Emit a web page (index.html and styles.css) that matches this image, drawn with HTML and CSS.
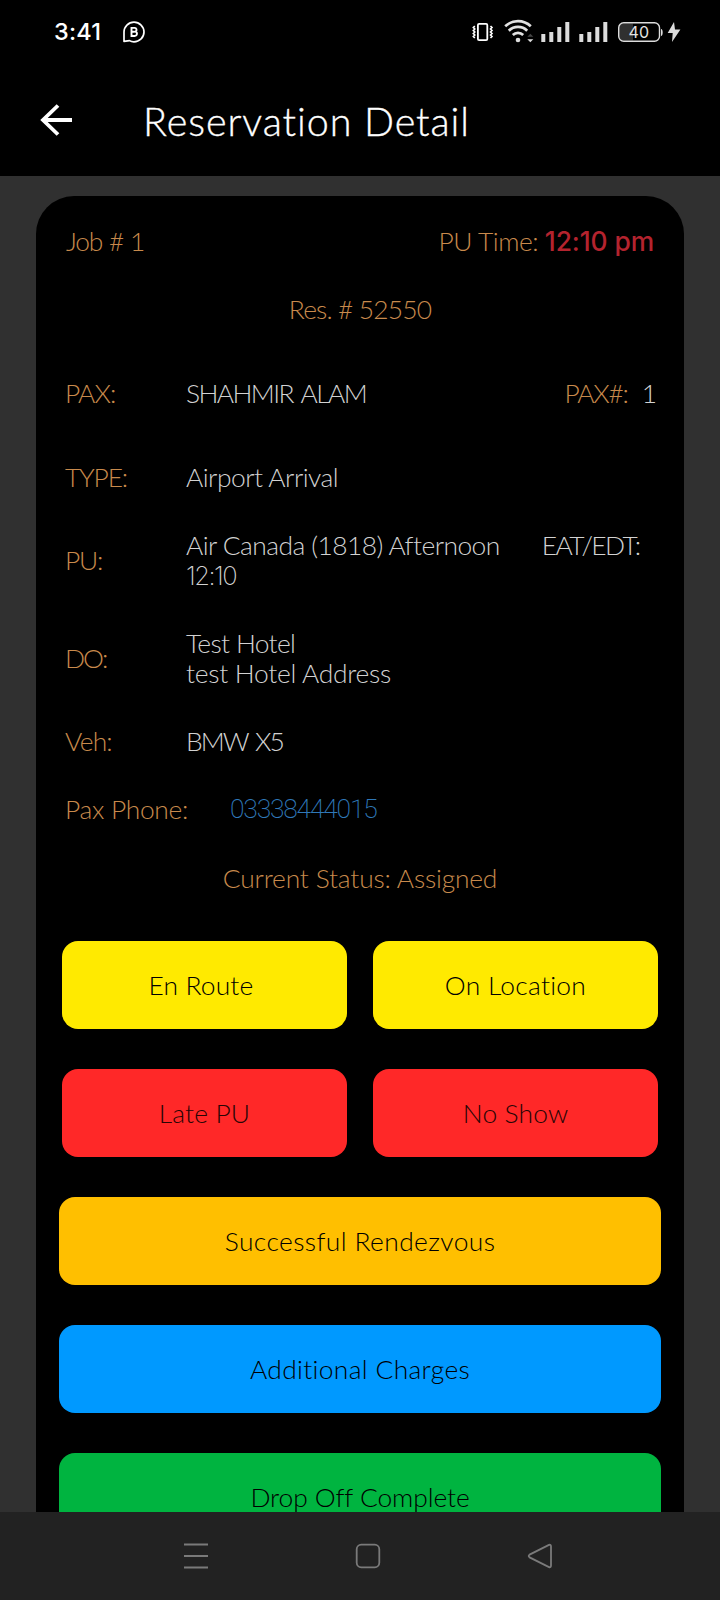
FILE: index.html
```
<!DOCTYPE html>
<html lang="en">
<head>
<meta charset="utf-8">
<title>Reservation Detail</title>
<link rel="stylesheet" href="styles.css">
</head>
<body>
<div class="phone">
  <div class="status">
    <span class="clock">3:41</span>
    <svg class="chat" width="24" height="24" viewBox="0 0 24 24"><path d="M2 21.3V12a10 9.8 0 1 1 10 9.8c-2 0-3.400-.5-4.500-1.200L2 21.300Z" fill="none" stroke="#fff" stroke-width="1.700" stroke-linejoin="round"/><path d="M9.500 7.900V16h3.300a2.200 2.200 0 0 0 .6-4.300A2 2 0 0 0 12.300 7.900ZM9.500 11.800h3" fill="none" stroke="#fff" stroke-width="1.900"/></svg>
    <svg class="indicators" width="212" height="26" viewBox="470 19 212 26">
      <g fill="none" stroke="#fff">
        <rect x="477.900" y="23.900" width="9.400" height="16.200" rx="1.200" stroke-width="1.800"/>
        <path d="M474.800 26l-1.500 1.500 1.500 1.500-1.500 1.500 1.500 1.500-1.500 1.500 1.500 1.500-1.500 1.500 1.500 1.500M490.500 26l1.500 1.500-1.500 1.500 1.500 1.500-1.500 1.500 1.500 1.500-1.500 1.500 1.500 1.500-1.500 1.500" stroke-width="1.600"/>
      </g>
      <g fill="none" stroke="#e2e2e2" stroke-width="2.700">
        <path d="M505.200 26.300a18.500 18.500 0 0 1 25.600 0M508.800 30.700a13 13 0 0 1 18.400 0M512.800 35a7.400 7.400 0 0 1 10.400 0"/>
      </g>
      <g fill="#dcdcdc">
        <circle cx="518" cy="40" r="2.300"/>
        <path d="M527.300 39.300h6l-3 3Z"/><path d="M527.300 36.800h6l-3-3Z" fill="#444"/>
        <path d="M541.300 34h4v8h-4ZM549.300 32h4v10h-4ZM557.300 27h4v15h-4ZM565.300 22h4v20h-4Z"/>
        <path d="M579.300 34h4v8h-4ZM587.300 32h4v10h-4ZM595.300 27h4v15h-4ZM603.300 22h4v20h-4Z"/>
        <path d="M661 29c2.300 0 2.300 7 0 7ZM674 22l-6.300 11h5l-.7 9 8.400-12.500h-5.400Z"/>
      </g>
      <path d="M622 23.500h11v17h-11l-3-3v-11Z" fill="#303030"/>
      <rect x="618.700" y="22.700" width="40.800" height="18.600" rx="5" fill="none" stroke="#dcdcdc" stroke-width="1.400"/>
      <text class="charge" x="638.800" y="37.500" text-anchor="middle">40</text>
    </svg>
  </div>

  <header class="appbar">
    <svg class="back" width="34" height="34" viewBox="0 0 34 34"><path d="M33 17H4M19 2.500L4 17l15 14.500" fill="none" stroke="#fff" stroke-width="3.800"/></svg>
    <h1 class="title">Reservation Detail</h1>
  </header>

  <main class="content">
    <section class="card">
      <div class="row split"><span class="label job">Job # 1</span><span class="label time">PU Time: <b class="due">12:10 pm</b></span></div>
      <div class="row center label res">Res. # 52550</div>
      <div class="row pax"><span class="label k-pax">PAX:</span><span class="value name">SHAHMIR ALAM</span><span class="label count">PAX#:</span><span class="value one">1</span></div>
      <div class="row type"><span class="label k-type">TYPE:</span><span class="value arrival">Airport Arrival</span></div>
      <div class="row pu"><span class="label k-pu">PU:</span><span class="value flight">Air Canada (1818) Afternoon<span class="eat">EAT/EDT:</span><br><span class="digits">12:10</span></span></div>
      <div class="row do"><span class="label k-do">DO:</span><span class="value"><span class="hotel">Test Hotel</span><br><span class="address">test Hotel Address</span></span></div>
      <div class="row veh"><span class="label k-veh">Veh:</span><span class="value car">BMW X5</span></div>
      <div class="row tel"><span class="label k-phone">Pax Phone:</span><a class="number">03338444015</a></div>
      <div class="row center label current">Current Status: Assigned</div>

      <div class="actions">
        <div class="pair"><button class="btn yellow en-route">En Route</button><button class="btn yellow wide-text">On Location</button></div>
        <div class="pair"><button class="btn red">Late PU</button><button class="btn red">No Show</button></div>
        <button class="btn amber">Successful Rendezvous</button>
        <button class="btn blue">Additional Charges</button>
        <button class="btn green">Drop Off Complete</button>
      </div>
    </section>
  </main>

  <nav class="navbar">
    <svg width="26" height="26" viewBox="0 0 26 26"><path d="M1 1.500h24M1 13h24M1 24.500h24"/></svg>
    <svg width="26" height="26" viewBox="0 0 26 26"><rect x="1.700" y="1.700" width="22.600" height="22.600" rx="4.500"/></svg>
    <svg width="26" height="26" viewBox="0 0 26 26"><path d="M22 1.900L2.600 11.600q-1.800 1.400 0 2.800L22 24.100q2 .6 2-1.600V3.500q0-2.200-2-1.600Z"/></svg>
  </nav>
</div>
</body>
</html>
```
FILE: styles.css
```
* { box-sizing: border-box; }
body {
  margin: 0;
  background: #000;
  font-family: Lato, "Open Sans", sans-serif;
  font-weight: 300;
}
.phone {
  display: flex;
  flex-direction: column;
  width: 720px;
  height: 1600px;
  overflow: hidden;
}

.status {
  display: flex;
  align-items: center;
  height: 64px;
  padding: 0 38px 0 54px;
  color: #fff;
}
.clock { width: 68px; font: 500 23.5px/30px Inter, sans-serif; letter-spacing: 0.2px; }
.chat { display: block; }
.indicators { display: block; margin-left: auto; }
.charge { fill: #e2e2e2; font-family: Inter, sans-serif; font-weight: 400; font-size: 16px; }

.appbar {
  display: flex;
  align-items: center;
  height: 112px;
  padding: 2px 40px 0 38.5px;
  color: #fff;
}
.back { margin-bottom: 2px; }
.title {
  margin: 0 0 0 70.5px;
  font-size: 39.5px;
  font-weight: 300;
  line-height: 48px;
  letter-spacing: 0.93px;
  -webkit-text-stroke: 0.35px #fff;
}

.content {
  flex: 1;
  min-height: 0;
  overflow: hidden;
  padding: 20px 36px 0;
  background: #303030;
}
.card {
  height: 1500px;
  padding: 30px 29px 0;
  border-radius: 38px;
  background: #000;
  font-size: 26.4px;
  line-height: 30px;
}
.row { display: flex; align-items: center; white-space: nowrap; }
.row > .label:first-child { width: 121px; }
.split { justify-content: space-between; }
.center { justify-content: center; }
.label { color: #c88a4c; }
.value { color: #d2d2d2; }
.job { padding-left: 1px; letter-spacing: -1.2px; word-spacing: 1px; }
.time { letter-spacing: -0.46px; }
.due { margin-right: 1px; color: #b4232e; font-family: Inter, sans-serif; font-weight: 500; letter-spacing: -0.1px; }
.res { margin-top: 38px; letter-spacing: -0.84px; }
.pax { margin-top: 54px; }
.k-pax { letter-spacing: -0.9px; }
.name { flex: 1; letter-spacing: -1.6px; word-spacing: 3px; }
.count { letter-spacing: -1.25px; }
.one { margin: 0 -2px 0 14px; }
.type { margin-top: 54px; }
.k-type { letter-spacing: -1.2px; }
.arrival { letter-spacing: -0.5px; }
.pu { margin-top: 38px; }
.k-pu { letter-spacing: -1.22px; }
.flight { letter-spacing: -0.56px; }
.eat { margin-left: 42px; letter-spacing: -1.57px; }
.digits { font-family: Inter, sans-serif; font-weight: 200; font-size: 25.5px; line-height: 1; letter-spacing: -1.5px; }
.do { margin-top: 38px; }
.k-do { letter-spacing: -2px; }
.hotel { letter-spacing: -0.66px; }
.address { letter-spacing: -0.28px; }
.veh { margin-top: 38px; }
.k-veh { letter-spacing: -0.8px; }
.car { letter-spacing: -2px; word-spacing: 3px; }
.tel { margin-top: 38px; }
.row > .k-phone:first-child { width: 165px; letter-spacing: -0.31px; }
.number { color: #2f78b8; font-family: Roboto, sans-serif; font-weight: 200; letter-spacing: -1.2px; }
.current { margin-top: 39px; letter-spacing: -0.18px; }

.actions {
  display: flex;
  flex-direction: column;
  gap: 40px;
  margin: 48px -6px 0;
}
.pair { display: grid; grid-template-columns: 1fr 1fr; gap: 26px; padding: 0 3px; }
.btn {
  height: 88px;
  padding: 0;
  border: 0;
  border-radius: 16px;
  color: #000;
  font: 300 26.4px/30px Lato, "Open Sans", sans-serif;
  letter-spacing: 0.14px;
}
.en-route { padding-right: 7px; }
.wide-text { letter-spacing: 0.28px; }
.yellow { background: #ffea00; }
.red { background: #ff2828; color: #280505; }
.amber { background: #ffbf00; letter-spacing: 0.4px; }
.blue { background: #0099ff; letter-spacing: 0.33px; }
.green { background: #00b440; letter-spacing: -0.09px; }

.navbar {
  display: flex;
  justify-content: space-between;
  height: 88px;
  padding: 31px 167px 0 183px;
  background: #222;
}
.navbar svg { fill: none; stroke: #7a7a7a; stroke-width: 1.800; }
```
